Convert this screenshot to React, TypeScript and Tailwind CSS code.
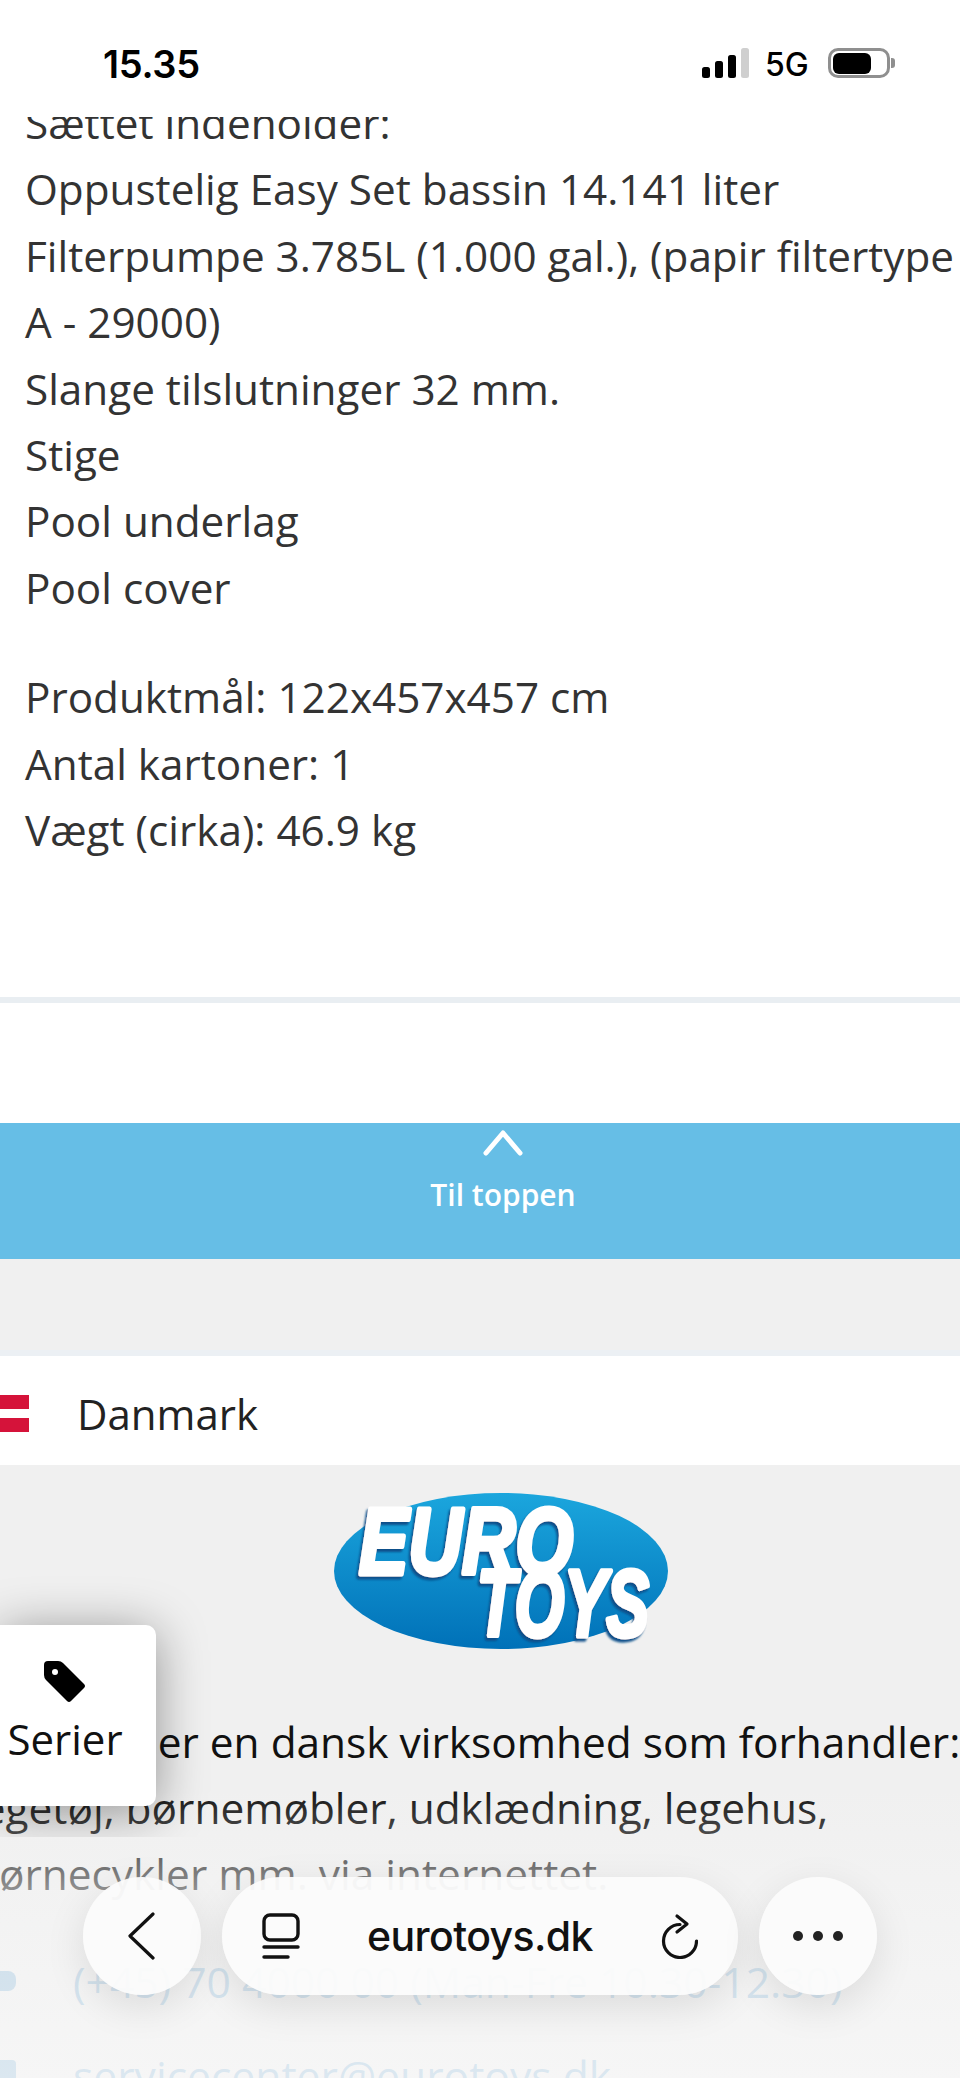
const specLines = [
  "Sættet indeholder:",
  "Oppustelig Easy Set bassin 14.141 liter",
  "Filterpumpe 3.785L (1.000 gal.), (papir filtertype",
  "A - 29000)",
  "Slange tilslutninger 32 mm.",
  "Stige",
  "Pool underlag",
  "Pool cover",
];

const sizeLines = ["Produktmål: 122x457x457 cm", "Antal kartoner: 1", "Vægt (cirka): 46.9 kg"];

const aboutLines = [
  { text: "EuroToys er en dansk virksomhed som forhandler:", indent: "ml-[-36px]" },
  { text: "legetøj, børnemøbler, udklædning, legehus,", indent: "ml-[-29px]" },
  { text: "børnecykler mm. via internettet.", indent: "ml-[-27px]" },
];

function StatusBar() {
  return (
    <div className="absolute inset-x-0 top-0 h-[117px] bg-white font-['Inter',sans-serif] text-black">
      <span className="absolute left-[103px] top-[42px] text-[38px] leading-[44px] font-semibold tracking-[-0.3px]">15.35</span>
      <div className="absolute left-[702px] top-[48px] flex h-[30px] items-end gap-[5px]">
        <div className="h-[11px] w-[8px] rounded-[2.5px] bg-black" />
        <div className="h-[17px] w-[8px] rounded-[2.5px] bg-black" />
        <div className="h-[23px] w-[8px] rounded-[2.5px] bg-black" />
        <div className="h-[30px] w-[8px] rounded-[2.5px] bg-[#cfcfcf]" />
      </div>
      <span className="absolute left-[765px] top-[46px] text-[32px] leading-[37px] font-medium">5G</span>
      <div className="absolute left-[828px] top-[48px] h-[30px] w-[62px] rounded-[10px] border-[3px] border-[#8f8f8f] p-[1.5px]">
        <div className="h-full w-[38px] rounded-[6px] bg-black" />
      </div>
      <div className="absolute left-[891px] top-[58px] h-[10px] w-[4px] rounded-r-[3px] bg-[#8f8f8f]" />
    </div>
  );
}

function EuroToysLogo() {
  return (
    <svg width="334" height="158" viewBox="0 0 334 158" className="block shrink-0">
      <defs>
        <linearGradient id="logoBlue" x1="0" y1="0" x2="0" y2="1">
          <stop offset="0" stopColor="#1ba6dd" />
          <stop offset="1" stopColor="#0071b8" />
        </linearGradient>
        <filter id="logoShadow" x="-10%" y="-10%" width="120%" height="130%">
          <feDropShadow dx="-2" dy="3" stdDeviation="0.8" floodColor="#0a4f8a" />
        </filter>
      </defs>
      <ellipse cx="167" cy="79" rx="167" ry="78" fill="url(#logoBlue)" />
      <g fontFamily="'Liberation Sans', sans-serif" fontWeight="700" fontStyle="italic" fill="#fff" stroke="#fff" strokeWidth="5" strokeLinejoin="round" filter="url(#logoShadow)">
        <text x="25" y="82" fontSize="94" textLength="214" lengthAdjust="spacingAndGlyphs">EURO</text>
        <text x="143" y="144" fontSize="94" textLength="172" lengthAdjust="spacingAndGlyphs">TOYS</text>
      </g>
    </svg>
  );
}

function BottomBar() {
  return (
    <div className="absolute left-[83px] top-[1877px] flex h-[118px] items-stretch gap-[21px]">
      <div className="flex w-[118px] items-center justify-center rounded-full bg-[#fbfbfb]/95 shadow-[0_12px_40px_rgba(0,0,0,0.1)]">
        <svg width="30" height="48" viewBox="0 0 30 48" fill="none" stroke="#111" strokeWidth="3.2" strokeLinecap="round" strokeLinejoin="round">
          <path d="M26 2 L3 24 L26 46" />
        </svg>
      </div>
      <div className="flex w-[516px] items-center rounded-full bg-[#fbfbfb]/95 pl-[40px] pr-[40px] shadow-[0_12px_40px_rgba(0,0,0,0.1)]">
        <svg width="38" height="46" viewBox="0 0 38 46" fill="none" stroke="#111" strokeWidth="3.4" strokeLinecap="round">
          <rect x="2" y="2" width="34" height="25" rx="6" />
          <path d="M2 34 H36" />
          <path d="M2 44 H26" />
        </svg>
        <span className="ml-[67px] font-['Inter',sans-serif] text-[41px] leading-none font-medium tracking-[-0.6px] text-[#111]">eurotoys.dk</span>
        <svg width="40" height="46" viewBox="0 0 40 46" fill="none" stroke="#111" strokeWidth="3.2" strokeLinecap="round" strokeLinejoin="round" className="ml-auto">
          <path d="M22 11.5 A16.5 16.5 0 1 0 38.5 28" />
          <path d="M19 3 L29 11 L19 19" />
        </svg>
      </div>
      <div className="flex w-[118px] items-center justify-center gap-[10px] rounded-full bg-[#fbfbfb]/95 shadow-[0_12px_40px_rgba(0,0,0,0.1)]">
        <div className="h-[10px] w-[10px] rounded-full bg-[#222]" />
        <div className="h-[10px] w-[10px] rounded-full bg-[#222]" />
        <div className="h-[10px] w-[10px] rounded-full bg-[#222]" />
      </div>
    </div>
  );
}

function SeriesTab() {
  return (
    <div className="absolute left-0 top-[1625px] flex h-[181px] w-[156px] flex-col items-center rounded-r-[10px] bg-white pt-[36px] shadow-[0_6px_50px_rgba(0,0,0,0.4)] [clip-path:inset(-80px_-80px_-31px_0)]">
      <svg width="42" height="42" viewBox="0 0 42 42" className="mr-[26px] shrink-0">
        <path d="M4 0 H14 Q17 0 19 2 L40 23 Q42 25 40 27 L27 40 Q25 42 23 40 L2 19 Q0 17 0 14 V4 Q0 0 4 0Z" fill="#000" />
        <circle cx="11" cy="11" r="3" fill="#fff" />
      </svg>
      <span className="mr-[26px] mt-[10px] text-[42px] leading-[52px] text-[#111]">Serier</span>
    </div>
  );
}

export default function App() {
  return (
    <div className="relative flex h-[2078px] w-[960px] flex-col overflow-hidden bg-white font-['Open_Sans',sans-serif]">
      {/* Product text */}
      <div className="shrink-0 pl-[25px] pt-[90px] text-[42.25px] leading-[66.4px] whitespace-nowrap text-[#333]">
        {specLines.map((line) => (
          <div key={line}>{line}</div>
        ))}
        <div className="mt-[43px]">
          {sizeLines.map((line) => (
            <div key={line}>{line}</div>
          ))}
        </div>
      </div>
      <div className="mt-[134px] h-[6px] shrink-0 bg-[#e9eef2]" />
      <div className="h-[120px] shrink-0" />

      {/* Back to top */}
      <div className="flex h-[136px] shrink-0 flex-col items-center bg-[#66bee6] pl-[46px] text-white">
        <svg width="40" height="26" viewBox="0 0 40 26" fill="none" stroke="#fff" strokeWidth="5" strokeLinecap="round" strokeLinejoin="round" className="mt-[7px]">
          <path d="M3 23 L20 3 L37 23" />
        </svg>
        <span className="mt-[19px] text-[30px] leading-[40px] font-semibold">Til toppen</span>
      </div>

      {/* Footer */}
      <div className="flex min-h-0 flex-1 flex-col bg-[#f0f0f0]">
        <div className="mt-[91px] h-[6px] shrink-0 bg-[#ecf0f4]" />
        <div className="flex h-[109px] shrink-0 items-center bg-white pt-[5px]">
          <div className="flex h-[37px] w-[29px] flex-col justify-between bg-white">
            <div className="h-[14px] bg-[#d5133a]" />
            <div className="h-[14px] bg-[#d5133a]" />
          </div>
          <span className="ml-[48px] text-[42px] text-[#222]">Danmark</span>
        </div>
        <div className="mt-[27px] flex shrink-0 justify-center pl-[42px]">
          <EuroToysLogo />
        </div>
        <div className="mt-[59px] shrink-0 text-[42.4px] leading-[66px] whitespace-nowrap text-[#111]">
          {aboutLines.map((line) => (
            <div key={line.text} className={line.indent}>{line.text}</div>
          ))}
        </div>
        <div className="mt-[41px] flex shrink-0 items-center gap-[57px] text-[42.6px] leading-[66px] whitespace-nowrap text-[#3d8fc9]">
          <div className="ml-[-20px] h-[20px] w-[36px] shrink-0 rounded-[8px] bg-[#3d8fc9]" />
          <span>(+45) 70 4000 00 (Man-Fre 10.30-12.30)</span>
        </div>
        <div className="mt-[28px] flex shrink-0 items-center gap-[57px] text-[42.6px] leading-[66px] whitespace-nowrap text-[#3d8fc9]">
          <div className="ml-[-20px] h-[30px] w-[36px] shrink-0 rounded-[4px] bg-[#3d8fc9]" />
          <span>servicecenter@eurotoys.dk</span>
        </div>
      </div>

      {/* Browser chrome frost */}
      <div className="absolute inset-x-0 bottom-0 h-[290px] bg-gradient-to-b from-[#f3f3f3]/0 via-[#f4f4f4]/80 to-[#f7f7f7]/85" />
      <SeriesTab />
      <BottomBar />
      <StatusBar />
    </div>
  );
}
